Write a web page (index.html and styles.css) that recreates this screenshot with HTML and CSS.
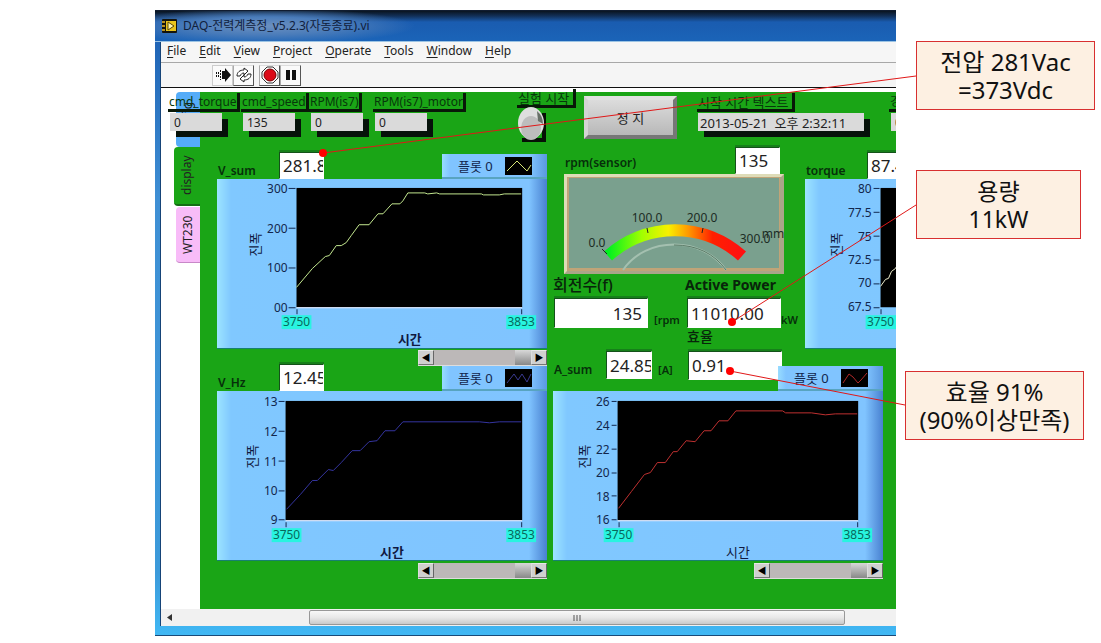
FILE: index.html
```html
<!DOCTYPE html>
<html lang="ko">
<head>
<meta charset="utf-8">
<title>DAQ-전력계측정</title>
<link rel="stylesheet" href="styles.css">
</head>
<body>
<main class="page">
  <section class="window">
    <header class="titlebar">
      <svg class="app-icon" width="15" height="14" viewBox="0 0 15 14"><rect width="15" height="14" rx="1" fill="#14140c"/><path d="M0 3h3M0 7h3M0 11h3" stroke="#b89020" stroke-width="2"/><rect x="4" y="2" width="10" height="10" fill="#e8c41e"/><path d="M6 3l6 4-6 4z" fill="#fff8b0" stroke="#5a4808"/></svg>
      <h1 class="title">DAQ-전력계측정_v5.2.3(자동종료).vi</h1>
    </header>
    <div class="body">
      <nav class="menubar">
        <button class="menu"><u>F</u>ile</button><button class="menu"><u>E</u>dit</button><button class="menu"><u>V</u>iew</button><button class="menu"><u>P</u>roject</button><button class="menu"><u>O</u>perate</button><button class="menu"><u>T</u>ools</button><button class="menu"><u>W</u>indow</button><button class="menu"><u>H</u>elp</button>
      </nav>
      <div class="toolbar">
        <button class="tool flat" aria-label="Run"><svg width="18" height="16" viewBox="0 0 18 16"><path d="M2.500 5v6M4.500 5v6M6.500 3v10" stroke="#111" stroke-dasharray="2 1"/><path d="M8 4h3V1l6 7-6 7v-3H8z" fill="#111"/></svg></button>
        <button class="tool" aria-label="Run continuously"><svg width="18" height="16" viewBox="0 0 18 16" fill="#fff" stroke="#222"><path d="M2 9c0-4 3-6 7-6V1l4 3-4 4V6C7 6 6 7 5 9z"/><path d="M16 7c0 4-3 6-7 6v2l-4-3 4-4v2c2 0 3-1 4-3z"/></svg></button>
        <button class="tool stop" aria-label="Abort"><svg width="18" height="18" viewBox="0 0 18 18"><path d="M6 1h6l5 5v6l-5 5H6l-5-5V6z" fill="#fff" stroke="#333"/><circle cx="9" cy="9" r="6" fill="#dc0a18" stroke="#700"/></svg></button>
        <button class="tool" aria-label="Pause"><svg width="16" height="16" viewBox="0 0 16 16"><path d="M3 3h4v10H3zM9 3h4v10H9z" fill="#111"/></svg></button>
      </div>
      <div class="canvas">
        <div class="tabs">
          <button class="tab config">config</button>
          <button class="tab display">display</button>
          <button class="tab wt">WT230</button>
        </div>
        <div class="strip">
          <div class="ctl"><label class="ctl-label" for="ct">cmd_torque</label><input class="ctl-field" id="ct" value="0"></div>
          <div class="ctl"><label class="ctl-label" for="cs">cmd_speed</label><input class="ctl-field" id="cs" value="135"></div>
          <div class="ctl"><label class="ctl-label" for="ri">RPM(is7)</label><input class="ctl-field" id="ri" value="0"></div>
          <div class="ctl"><label class="ctl-label" for="rm">RPM(is7)_motor</label><input class="ctl-field" id="rm" value="0"></div>
          <div class="ctl knob-ctl"><span class="ctl-label wide">실험 시작</span>
            <button class="knob" aria-label="실험 시작"><svg width="32" height="38" viewBox="0 0 32 38"><path d="M5 35h22V8" fill="none" stroke="#061006" stroke-width="4"/><ellipse cx="14" cy="18" rx="13" ry="16" fill="#dedede"/><ellipse cx="14" cy="23" rx="10" ry="12" fill="#bdbdbd"/><path d="M20 6q6 5 6 13l-5-3z" fill="#687068"/></svg></button>
          </div>
          <button class="stop-btn">정 지</button>
          <div class="ctl time-ctl"><label class="ctl-label wide" for="st">시작 시간 텍스트</label><input class="ctl-field time" id="st" value="2013-05-21  오후 2:32:11"></div>
          <div class="ctl"><label class="ctl-label" for="el">경</label><input class="ctl-field" id="el" value="0"></div>
        </div>
        <div class="panel">
          <div class="col">
            <div class="head tall">
              <label class="name" for="vs">V_sum</label><input class="num" id="vs" value="281.8">
              <div class="legend">플롯 0<svg width="27" height="18" viewBox="0 0 27 18"><rect width="27" height="18"/><path d="M2 14L12 4l10 10 4-6" fill="none" stroke="#d8e878"/></svg></div>
            </div>
            <svg class="chart" width="330" height="170" viewBox="0 0 330 170">
              <rect class="plot" x="79" y="9" width="227" height="120"/>
              <path class="axis" d="M71 9.500h7M71 49.500h7M71 89.500h7M71 129.500h7M79.500 131v5M305.500 131v5"/>
              <path class="base" d="M79 129.500H306"/>
              <polyline class="line green" points="79,109 95,90 108,78 112,77 119,67 124,67 129,64 134,57 142,46 152,46 161,35 166,35 175,25 183,25 186,22 191,14 208,14 211,15 220,14 223,15 265,15 267,16 283,16 288,15 305,15"/>
              <g class="ytext"><text x="70" y="14">300</text><text x="70" y="54">200</text><text x="70" y="94">100</text><text x="70" y="134">00</text></g>
              <rect class="mark" x="64" y="137" width="30" height="14"/><rect class="mark" x="290" y="137" width="30" height="14"/>
              <g class="xtext"><text x="79" y="148">3750</text><text x="305" y="148">3853</text></g>
              <text class="amp" transform="translate(42 66) rotate(-90)">진폭</text><text class="time-label bold" x="193" y="166">시간</text>
            </svg>
            <div class="scroll"><button aria-label="left">◀</button><i></i><button aria-label="right">▶</button></div>
            <div class="head">
              <label class="name" for="vh">V_Hz</label><input class="num" id="vh" value="12.45">
              <div class="legend">플롯 0<svg width="27" height="18" viewBox="0 0 27 18"><rect width="27" height="18"/><path d="M2 14l7-9 4 6 4-6 5 8 4-8" fill="none" stroke="#3a3a90"/></svg></div>
            </div>
            <svg class="chart" width="330" height="170" viewBox="0 0 330 170">
              <rect class="plot" x="68" y="10" width="238" height="120"/>
              <path class="axis" d="M61 10.500h6M61 40.500h6M61 70.500h6M61 100.500h6M61 129.500h6M68.500 132v5M305.500 132v5"/>
              <path class="base" d="M68 130.500H306"/>
              <polyline class="line blue" points="69,119 83,104 95,90 100,90 111,79 116,80 124,72 135,60 143,60 152,51 160,50 168,40 178,40 186,31 263,31 273,32 283,31 305,31"/>
              <g class="ytext"><text x="60" y="15">13</text><text x="60" y="45">12</text><text x="60" y="75">11</text><text x="60" y="105">10</text><text x="60" y="134">9</text></g>
              <rect class="mark" x="54" y="138" width="30" height="14"/><rect class="mark" x="290" y="138" width="30" height="14"/>
              <g class="xtext"><text x="69" y="149">3750</text><text x="305" y="149">3853</text></g>
              <text class="amp" transform="translate(39 66) rotate(-90)">진폭</text><text class="time-label bold" x="175" y="167">시간</text>
            </svg>
            <div class="scroll"><button aria-label="left">◀</button><i></i><button aria-label="right">▶</button></div>
          </div>
          <div class="col">
            <div class="upper">
              <div class="meter">
                <div class="meter-head"><label class="name" for="rs">rpm(sensor)</label><input class="num" id="rs" value="135"></div>
                <svg class="gauge" width="220" height="100" viewBox="0 0 220 100">
                  <defs><linearGradient id="heat"><stop offset="0" stop-color="#00f020"/><stop offset=".25" stop-color="#a0ff00"/><stop offset=".45" stop-color="#f8f000"/><stop offset=".6" stop-color="#ff9800"/><stop offset=".78" stop-color="#ff2000"/><stop offset="1" stop-color="#ff1010"/></linearGradient></defs>
                  <rect width="220" height="100" fill="#aaa588"/><path d="M0 100V0h220l-3 3H3v94z" fill="#dedcb8"/><rect x="3" y="3" width="213" height="94" fill="#c0a478"/><rect x="5" y="4" width="210" height="90" fill="#7aa08e"/>
                  <path d="M44 82A100 100 0 0 1 178 82" fill="none" stroke="url(#heat)" stroke-width="12"/>
                  <path d="M59 96C82 62 138 62 162 96" fill="none" stroke="#a4c0b0" stroke-width="2"/><path d="M110 71q34 0 52 25" fill="none" stroke="#5b7c68"/>
                  <path d="M38 75l5 5M83 54l1 5M139 54l-1 5" stroke="#222"/>
                  <g class="gtext"><text x="33" y="73">0.0</text><text x="83" y="48">100.0</text><text x="138" y="48">200.0</text><text x="191" y="69">300.0</text><text x="209" y="64">mm</text></g>
                </svg>
                <div class="pair caps"><label for="rf" class="kr">회전수(f)</label><label for="ap">Active Power</label></div>
                <div class="pair"><input class="num right" id="rf" value="135"><span class="unit">[rpm</span><input class="num" id="ap" value="11010.00"><span class="unit">kW</span></div>
                <label class="eff" for="ef">효율</label>
              </div>
              <div class="torque">
                <div class="head tall"><label class="name" for="tq">torque</label><input class="num" id="tq" value="87.45"></div>
                <svg class="chart" width="330" height="170" viewBox="0 0 330 170">
                  <rect class="plot" x="75" y="9" width="231" height="120"/>
                  <path class="axis" d="M68 9.500h6M68 33.500h6M68 57.500h6M68 81.500h6M68 105.500h6M68 129.500h6M75.500 131v5"/>
                  <polyline class="line pale" points="75,108 80,101 83,100 86,93 90,90 94,83"/>
                  <g class="ytext"><text x="66" y="14">80</text><text x="66" y="38">77.5</text><text x="66" y="62">75</text><text x="66" y="85">72.5</text><text x="66" y="109">70</text><text x="66" y="133">67.5</text></g>
                  <rect class="mark" x="60" y="137" width="32" height="14"/>
                  <g class="xtext"><text x="75" y="148">3750</text></g>
                  <text class="amp" transform="translate(35 66) rotate(-90)">진폭</text>
                </svg>
              </div>
            </div>
            <div class="sums">
              <label class="name" for="as">A_sum</label><input class="num" id="as" value="24.85"><span class="unit">[A]</span><input class="num wide" id="ef" value="0.91">
              <div class="legend">플롯 0<svg width="27" height="18" viewBox="0 0 27 18"><rect width="27" height="18"/><path d="M2 14l6-9 4 3 5 6 3-3 6-7" fill="none" stroke="#b02828"/></svg></div>
            </div>
            <svg class="chart" width="330" height="170" viewBox="0 0 330 170">
              <rect class="plot" x="64" y="10" width="242" height="120"/>
              <path class="axis" d="M58 10.500h5M58 34.500h5M58 58.500h5M58 82.500h5M58 105.500h5M58 129.500h5M65.500 132v5M305.500 132v5"/>
              <path class="base" d="M64 130.500H306"/>
              <polyline class="line red" points="65,118 78,101 91,84 97,82 104,72 112,72 120,61 124,61 133,50 142,51 151,40 158,40 166,30 175,30 183,20 230,20 233,22 259,22 273,24 283,23 305,23"/>
              <g class="ytext"><text x="56" y="15">26</text><text x="56" y="39">24</text><text x="56" y="63">22</text><text x="56" y="87">20</text><text x="56" y="111">18</text><text x="56" y="134">16</text></g>
              <rect class="mark" x="50" y="138" width="30" height="14"/><rect class="mark" x="290" y="138" width="30" height="14"/>
              <g class="xtext"><text x="65" y="149">3750</text><text x="305" y="149">3853</text></g>
              <text class="amp" transform="translate(35 66) rotate(-90)">진폭</text><text class="time-label" x="185" y="167">시간</text>
            </svg>
            <div class="scroll"><button aria-label="left">◀</button><i></i><button aria-label="right">▶</button></div>
          </div>
        </div>
      </div>
      <div class="hscroll"><button class="arrow" aria-label="scroll left"><svg width="5" height="7" viewBox="0 0 5 7"><path d="M5 0v7L0 3.500z" fill="#333"/></svg></button><div class="thumb"><svg width="8" height="6" viewBox="0 0 8 6"><path d="M0 0v6M3 0v6M6 0v6" transform="translate(1)" stroke="#555"/></svg></div></div>
    </div>
  </section>
  <aside class="notes">
    <p class="note first">전압 281Vac<br>=373Vdc</p>
    <p class="note second">용량<br>11kW</p>
    <p class="note third">효율 91%<br>(90%이상만족)</p>
  </aside>
  <svg class="leaders" width="1101" height="643" viewBox="0 0 1101 643"><path d="M323 153L916 76M732 322L916 205M730 371L905 405" stroke="#e01818" fill="none"/><g fill="#ff0000"><circle cx="323" cy="153" r="4"/><circle cx="732" cy="322" r="4"/><circle cx="730" cy="371" r="4"/></g></svg>
</main>
</body>
</html>
```

FILE: styles.css
```css
* { box-sizing: border-box; }
body { margin: 0; background: #fff; color: #222; font: 12px/16px "Noto Sans", "Noto Sans CJK KR", sans-serif; }
button, input { font: inherit; color: inherit; margin: 0; padding: 0; border: 0; border-radius: 0; background: none; }
svg { display: block; flex: none; }
.page { position: relative; display: grid; grid-template-columns: minmax(0, 1fr) 205px; min-height: 100vh; padding: 10px 0 7px 155px; overflow: hidden; }

.window { display: flex; flex-direction: column; border-top: 1px solid #101c30; border-bottom: 1px solid #1a4a78; background: linear-gradient(#1a5cb0, #3f8fd4 30%, #3c9ada 90%, #40b8f4); overflow: hidden; }
.titlebar { display: flex; align-items: center; gap: 6px; height: 31px; padding-left: 7px; border-bottom: 1px solid #9cc4e4; background: radial-gradient(ellipse 150px 18px at 110px 15px, #6c90c0, #4a7cba 50%, transparent), linear-gradient(#0a1420, #123058 5px, #1a5cb0 11px, #1b64b8); }
.title { margin: 0; font-size: 12px; line-height: 16px; font-weight: 400; color: #10203c; white-space: pre; }
.body { display: flex; flex-direction: column; flex: 1; margin: 0 0 9px 5px; border-left: 1px solid #164478; background: #fff; overflow: hidden; }
.menubar { display: flex; gap: 13px; height: 21px; padding-left: 6px; background: #f6f6f6; border-bottom: 1px solid #a8a8a8; }
.menu { height: 18px; }
.menu u { text-underline-offset: 2px; }
.toolbar { display: flex; align-items: center; height: 25px; padding-left: 51px; background: #f5f5f5; border-bottom: 1px solid #101010; }
.tool { display: grid; place-items: center; width: 21px; height: 21px; border: 1px solid; border-color: #ddd #555 #555 #aaa; background: #fafafa; }
.tool.flat { border-color: #ccc; }
.tool.stop { margin-left: 5px; }

.canvas { position: relative; display: flex; flex: 1; padding-top: 4px; overflow: hidden; }
.tabs { display: flex; flex-direction: column; align-items: flex-end; flex: none; width: 39px; }
.tab { writing-mode: vertical-rl; transform: rotate(180deg); width: 24px; height: 55px; text-align: center; line-height: 22px; }
.tab.config { background: #55acf8; border-radius: 0 4px 4px 0; }
.tab.display { width: 26px; height: 59px; background: #1aa516; border-radius: 0 4px 4px 0; border-top: 2px solid #146e14; }
.tab.wt { height: 56px; margin-top: 1px; background: #f8bcf8; border-radius: 0 4px 4px 0; border-top: 1px solid #c888c8; }
.panel { display: grid; grid-template-columns: 330px minmax(0, 1fr); gap: 6px; align-items: start; flex: 1; min-width: 0; padding: 56px 0 24px 17px; background: #1aa516; overflow: hidden; }
.col { min-width: 0; }

.strip { position: absolute; z-index: 1; top: 5px; left: 7px; display: grid; grid-template-columns: 73px 68px 64px 144px 67px 113px 192px 60px; align-items: start; }
.ctl { display: grid; gap: 1px; justify-items: start; }
.ctl-label { height: 19px; padding-left: 1px; line-height: 18px; color: #07380a; border-right: 3px solid #081808; border-bottom: 3px solid #081808; white-space: nowrap; }
.ctl-label.wide { font-size: 13px; padding-right: 4px; }
.ctl-field { width: 52px; height: 18px; margin-left: 2px; padding-left: 4px; background: #dadada; box-shadow: 6px 6px 0 #06120a; }
.ctl-field.time { width: 166px; margin-left: 1px; padding-left: 2px; font-size: 13px; white-space: pre; }
.knob-ctl { gap: 0; margin-top: -4px; }
.knob { margin-top: -3px; }
.stop-btn { width: 93px; height: 43px; margin-top: 3px; border: 4px solid; border-color: #e2e2e2 #777 #777 #d4d4d4; background: linear-gradient(#dcdcdc, #b8b8b8); font-size: 13px; }

.head { display: flex; align-items: flex-end; height: 25px; }
.head.tall { height: 31px; }
.name { width: 62px; font-size: 12px; font-weight: 600; color: #06300a; padding-left: 1px; }
.num { width: 45px; height: 27px; padding: 0 0 0 3px; border: 1px solid; border-color: #14521a #fff #fff #14521a; background: #fff; font-size: 17px; line-height: 24px; box-shadow: 0 -2px 0 #16801a; }
.legend { display: flex; align-items: center; justify-content: space-between; width: 105px; height: 25px; margin-left: auto; padding: 0 15px 0 16px; background: linear-gradient(90deg, #98dcff, #80c4ff 8px, #80c4ff 88px, #5a98e0); border-bottom: 2px solid #58a4c0; color: #12264c; font-size: 13px; white-space: nowrap; }
.chart { background: linear-gradient(90deg, #9ce4ff, #80c8ff 14px, #80c4ff 312px, #4880d0); border-bottom: 1px solid #188070; }
.plot { fill: #000; }
.axis { stroke: #122850; fill: none; }
.base { stroke: #f0f0ff; fill: none; }
.line { fill: none; }
.line.green { stroke: #c4e890; }
.line.blue { stroke: #3434a0; }
.line.red { stroke: #c03030; }
.line.pale { stroke: #f0f0d0; }
.mark { fill: #28f4e0; }
.ytext { text-anchor: end; fill: #12264c; font-size: 12px; }
.xtext { text-anchor: middle; fill: #08685c; font-size: 12px; }
.gtext { text-anchor: middle; fill: #1c2c24; font-size: 12px; }
.amp, .time-label { text-anchor: middle; font-size: 13px; fill: #101840; }
.bold { font-weight: 700; }
.scroll { display: flex; width: 129px; height: 16px; margin: 1px 0 0 201px; background: #bcb8b8; border-bottom: 1px solid #ddd; }
.col > .scroll:last-child { margin-top: 2px; }
.scroll button { width: 16px; font-size: 9px; line-height: 14px; background: #d0d0d0; border: 1px solid; border-color: #e8e8e8 #666 #777 #ddd; color: #000; }
.scroll i { width: 16px; margin-left: auto; background: linear-gradient(#d8d8d8, #888); }

.upper { display: flex; height: 203px; }
.meter { flex: none; width: 252px; }
.meter-head { display: flex; align-items: flex-end; height: 26px; padding-left: 11px; }
.meter-head .name { width: 171px; padding-bottom: 3px; }
.gauge { margin-left: 11px; }
.pair { display: grid; grid-template-columns: 94px 39px 94px 25px; align-items: end; padding-left: 1px; }
.pair .num { width: auto; height: 30px; }
.pair.caps { grid-template-columns: 132px auto; height: 24px; padding: 0 0 2px; align-items: center; font-size: 14px; font-weight: 700; color: #08240a; }
.kr { font-size: 16px; font-weight: 500; }
.pair .num.right { text-align: right; padding-right: 5px; }
.unit { padding-left: 6px; font-size: 11px; font-weight: 600; color: #06300a; white-space: nowrap; overflow: hidden; }
.pair .unit:last-child { padding-left: 0; }
.eff { display: block; padding: 1px 0 0 134px; font-size: 14px; font-weight: 500; color: #08240a; }
.sums { display: grid; grid-template-columns: 53px 46px 36px 94px 101px; align-items: start; height: 40px; }
.sums .name, .sums .unit { width: auto; padding-top: 11px; }
.sums .num { width: auto; height: 28px; }
.sums .wide { height: 29px; }
.sums .legend { width: 105px; margin: 15px 0 0 -4px; z-index: 1; }

.hscroll { display: grid; grid-template-columns: 148px minmax(0, 1fr) 51px; height: 17px; padding: 1px 0; background: #f1f1f1; }
.arrow { display: grid; place-items: center; width: 16px; height: 15px; }
.thumb { display: grid; place-items: center; border: 1px solid #989898; border-radius: 2px; background: linear-gradient(#f8f8f8, #e8e8e8 50%, #cacaca); }

.notes { padding: 31px 0 0 9px; }
.note { margin: 0; border: 1px solid #d83030; background: #fdf0e2; color: #111; font-size: 24px; line-height: 28px; padding: 6px 0 5px; text-align: center; }
.note.first { width: 179px; margin-left: 11px; }
.note.second { width: 165px; margin: 60px 0 0 11px; font-size: 23px; }
.note.third { width: 179px; margin-top: 132px; }
.leaders { position: absolute; z-index: 2; top: 0; left: 0; pointer-events: none; }
```
